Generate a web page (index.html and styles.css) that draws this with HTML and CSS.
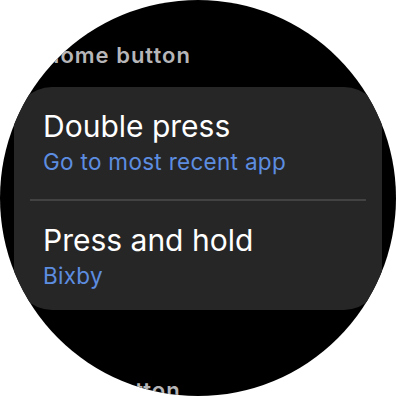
FILE: index.html
```html
<!DOCTYPE html>
<html lang="en">

<head>
    <meta charset="UTF-8">
    <meta name="viewport" content="width=device-width, initial-scale=1.0">
    <title>Home button</title>
    <link rel="stylesheet" href="styles.css">
</head>

<body>

    <!-- Pantalla redonda del reloj -->
    <div class="watch">
        <h2 class="section-title">Home button</h2>

        <div class="card">
            <div class="row">
                <div class="row-title">Double press</div>
                <div class="row-value">Go to most recent app</div>
            </div>
            <div class="divider"></div>
            <div class="row">
                <div class="row-title">Press and hold</div>
                <div class="row-value">Bixby</div>
            </div>
        </div>

        <h2 class="section-title section-next">Back button</h2>
    </div>

</body>

</html>
```

FILE: styles.css
```css
/* Reset */
* {
    margin: 0;
    padding: 0;
    box-sizing: border-box;
}

body {
    font-family: Inter, Roboto, sans-serif;
    background-color: #fff;
}

/* Pantalla del reloj */
.watch {
    width: 396px;
    height: 396px;
    border-radius: 50%;
    background-color: #000;
    overflow: hidden;
    padding: 42px 14px 0;
}

/* Titulos de seccion */
.section-title {
    font-size: 22px;
    line-height: 26px;
    font-weight: 600;
    letter-spacing: 1px;
    color: #b6b6b9;
    padding-left: 29px;
}

.section-next {
    margin-top: 67px;
}

/* Tarjeta */
.card {
    margin-top: 19px;
    background-color: #262626;
    border-radius: 38px;
}

.row {
    padding: 21px 29px 23px;
}

.row + .divider + .row {
    padding-bottom: 20px;
}

.row-title {
    font-size: 30px;
    line-height: 36px;
    color: #fff;
}

.row-value {
    margin-top: 4px;
    font-size: 22.5px;
    line-height: 28px;
    letter-spacing: 0.3px;
    color: #5d8de0;
}

.divider {
    height: 2px;
    margin: 0 16px;
    background-color: #424242;
}
```
